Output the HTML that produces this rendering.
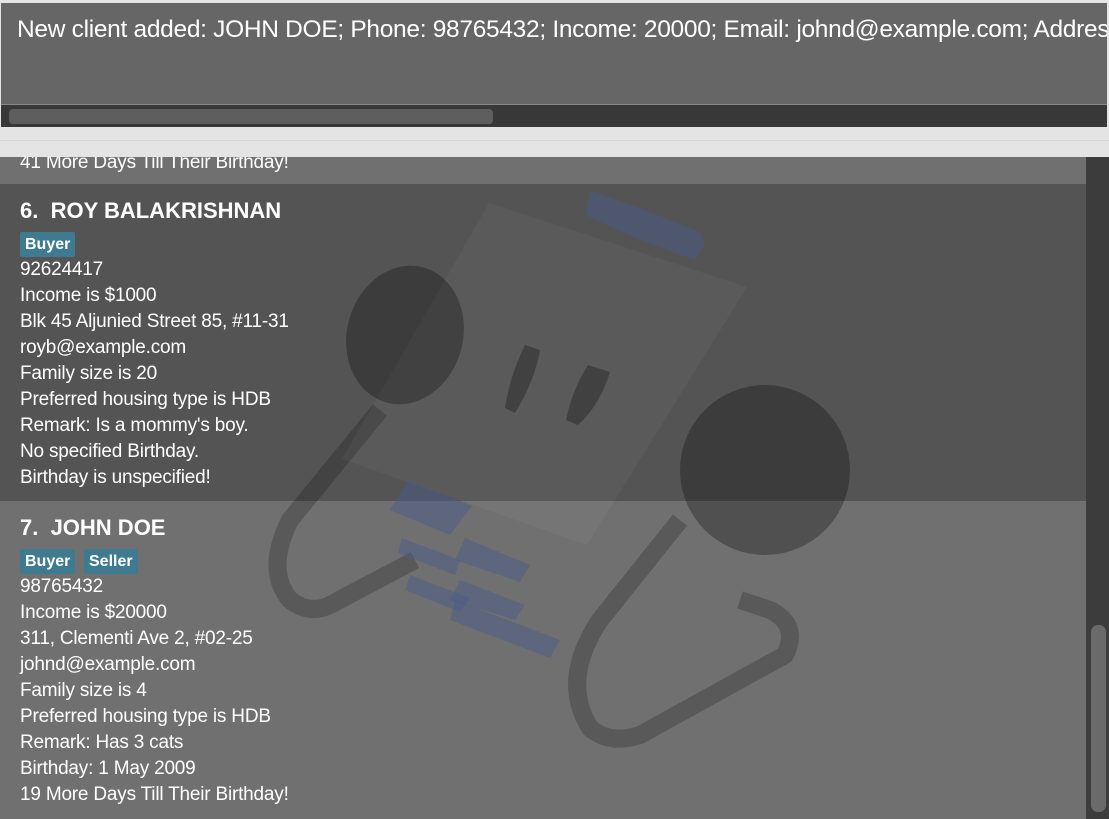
<!DOCTYPE html>
<html><head><style>
body{margin:0;width:1109px;height:819px;overflow:hidden;background:#e4e4e4;font-family:"Segoe UI","Liberation Sans",sans-serif;position:relative}
.res{position:absolute;left:1px;top:3px;width:1106px;height:101px;background:#666;border-bottom:1px solid #888;overflow:hidden}
.res div{position:absolute;left:16px;top:13px;color:#fff;font-size:24.5px;white-space:nowrap;letter-spacing:-0.3px}
.hs{position:absolute;left:1px;top:105px;width:1106px;height:22px;background:#383838}
.hs div{position:absolute;left:8px;top:4px;width:484px;height:15px;background:#5e5e5e;border-radius:4px}
.line{position:absolute;left:0;top:140px;width:1109px;height:1px;background:#d8d8d8}
.list{position:absolute;left:0;top:157px;width:1086px;height:662px;overflow:hidden}
.c{position:absolute;left:0;width:1086px}
.t{position:absolute;left:20px;color:#fff;font-size:19px;white-space:nowrap;letter-spacing:-0.2px}
.n{font-size:22px;font-weight:bold;letter-spacing:0}
.tag{position:absolute;height:25px;background:#3e7b91;color:#fff;font-size:16px;line-height:25px;padding:0 5px;border-radius:2px;font-weight:bold}
.vs{position:absolute;left:1086px;top:157px;width:23px;height:662px;background:#3c3c3c}
.vs div{position:absolute;left:5px;top:468px;width:15px;height:187px;background:#6a6a6a;border-radius:7px}
</style></head><body>
<div class="res"><div>New client added: JOHN DOE; Phone: 98765432; Income: 20000; Email: johnd@example.com; Address: 311, Clementi Ave 2</div></div>
<div class="hs"><div></div></div>
<div class="line"></div>
<div class="list">
<div class="c" style="top:0;height:27px;background:#707070"></div>
<div class="c" style="top:27px;height:317px;background:#545454"></div>
<div class="c" style="top:344px;height:318px;background:#707070"></div>
<svg width="1086" height="662" style="position:absolute;left:0;top:0" viewBox="0 157 1086 662">
<g fill="none" stroke="rgba(0,0,0,0.2)" stroke-width="18" stroke-linejoin="round">
<path d="M380,410 L290,520 Q265,570 290,600 Q310,615 330,605 L415,560"/>
<path d="M680,520 L600,620 Q560,680 590,728 Q610,745 640,735 L785,655 Q800,625 770,610 L740,600"/>
</g>
<polygon points="489,203 747,287 587,545 342,459" fill="rgba(255,255,255,0.04)"/>
<ellipse cx="405" cy="335" rx="58" ry="70" fill="rgba(0,0,0,0.28)" transform="rotate(15 405 335)"/>
<ellipse cx="765" cy="470" rx="85" ry="85" fill="rgba(0,0,0,0.28)"/>
<path d="M525,345 L540,350 Q535,380 515,413 L505,408 Q510,375 525,345Z" fill="rgba(0,0,0,0.28)"/>
<path d="M588,365 L610,372 Q600,405 578,425 L566,420 Q572,390 588,365Z" fill="rgba(0,0,0,0.28)"/>
<g fill="rgba(70,90,140,0.45)">
<polygon points="590,190 650,212 700,232 705,245 695,260 640,240 585,215"/>
<polygon points="408,480 472,506 450,535 390,510"/>
<polygon points="402,538 460,560 455,575 398,553"/>
<polygon points="465,538 530,565 520,582 455,560"/>
<polygon points="410,575 470,598 460,612 405,590"/>
<polygon points="460,580 525,605 515,620 450,600"/>
<polygon points="455,600 560,640 550,658 450,620"/>
</g>
</svg>
<div class="t" style="top:-5px">41 More Days Till Their Birthday!</div>
<div class="t n" style="top:41px">6.&nbsp; ROY BALAKRISHNAN</div>
<div class="tag" style="left:20px;top:75px">Buyer</div>
<div class="t" style="top:102px">92624417</div>
<div class="t" style="top:128px">Income is $1000</div>
<div class="t" style="top:154px">Blk 45 Aljunied Street 85, #11-31</div>
<div class="t" style="top:180px">royb@example.com</div>
<div class="t" style="top:206px">Family size is 20</div>
<div class="t" style="top:232px">Preferred housing type is HDB</div>
<div class="t" style="top:258px">Remark: Is a mommy's boy.</div>
<div class="t" style="top:284px">No specified Birthday.</div>
<div class="t" style="top:310px">Birthday is unspecified!</div>
<div class="t n" style="top:358px">7.&nbsp; JOHN DOE</div>
<div class="tag" style="left:20px;top:392px">Buyer</div>
<div class="tag" style="left:84px;top:392px">Seller</div>
<div class="t" style="top:419px">98765432</div>
<div class="t" style="top:445px">Income is $20000</div>
<div class="t" style="top:471px">311, Clementi Ave 2, #02-25</div>
<div class="t" style="top:497px">johnd@example.com</div>
<div class="t" style="top:523px">Family size is 4</div>
<div class="t" style="top:549px">Preferred housing type is HDB</div>
<div class="t" style="top:575px">Remark: Has 3 cats</div>
<div class="t" style="top:601px">Birthday: 1 May 2009</div>
<div class="t" style="top:627px">19 More Days Till Their Birthday!</div>
</div>
<div class="vs"><div></div></div>
</body></html>
